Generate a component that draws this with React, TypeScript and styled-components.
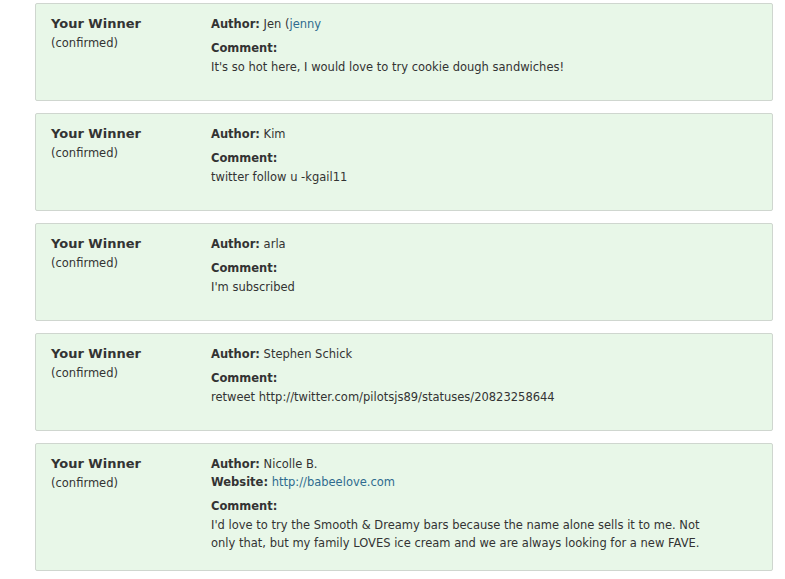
import React from "react";
import styled, { createGlobalStyle } from "styled-components";

const Global = createGlobalStyle`
  html, body { margin: 0; padding: 0; background: #ffffff; }
  body { font-family: "DejaVu Sans", Verdana, sans-serif; color: #333333; }
`;

const Page = styled.div`
  display: flex;
  flex-direction: column;
  gap: 12px;
  padding: 3px 12px 0 35px;
`;

const Card = styled.div`
  width: 738px;
  box-sizing: border-box;
  display: grid;
  grid-template-columns: 160px 1fr;
  padding: 11px 16px 18px 15px;
  background: #e8f7e8;
  border: 1px solid #cfd6cf;
  border-radius: 2px;
  min-height: 98px;
`;

const WinnerCol = styled.div`
  display: flex;
  flex-direction: column;
`;

const WinnerTitle = styled.div`
  font-size: 13px;
  font-weight: bold;
  line-height: 18px;
  color: #333;
`;

const Confirmed = styled.div`
  font-size: 11.5px;
  line-height: 20px;
  color: #333;
`;

const Details = styled.div`
  display: flex;
  flex-direction: column;
  font-size: 11.5px;
  line-height: 18px;
  max-width: 500px;
`;

const Meta = styled.div``;

const Label = styled.span`
  font-weight: bold;
`;

const CommentLabel = styled.div`
  font-weight: bold;
  margin-top: 6px;
`;

const CommentText = styled.div`
  margin-top: 1px;
`;

const Link = styled.a`
  color: #2f6b8f;
  text-decoration: none;
`;

type Entry = {
  author: React.ReactNode;
  website?: string;
  comment: string;
};

const entries: Entry[] = [
  { author: <>Jen (<Link href="#">jenny</Link></>, comment: "It's so hot here, I would love to try cookie dough sandwiches!" },
  { author: "Kim", comment: "twitter follow u -kgail11" },
  { author: "arla", comment: "I'm subscribed" },
  { author: "Stephen Schick", comment: "retweet http://twitter.com/pilotsjs89/statuses/20823258644" },
  {
    author: "Nicolle B.",
    website: "http://babeelove.com",
    comment:
      "I'd love to try the Smooth & Dreamy bars because the name alone sells it to me. Not only that, but my family LOVES ice cream and we are always looking for a new FAVE.",
  },
];

export default function App() {
  return (
    <>
      <Global />
      <Page>
        {entries.map((e, i) => (
          <Card key={i}>
            <WinnerCol>
              <WinnerTitle>Your Winner</WinnerTitle>
              <Confirmed>(confirmed)</Confirmed>
            </WinnerCol>
            <Details>
              <Meta>
                <Label>Author:</Label> {e.author}
              </Meta>
              {e.website && (
                <Meta>
                  <Label>Website:</Label> <Link href="#">{e.website}</Link>
                </Meta>
              )}
              <CommentLabel>Comment:</CommentLabel>
              <CommentText>{e.comment}</CommentText>
            </Details>
          </Card>
        ))}
      </Page>
    </>
  );
}
